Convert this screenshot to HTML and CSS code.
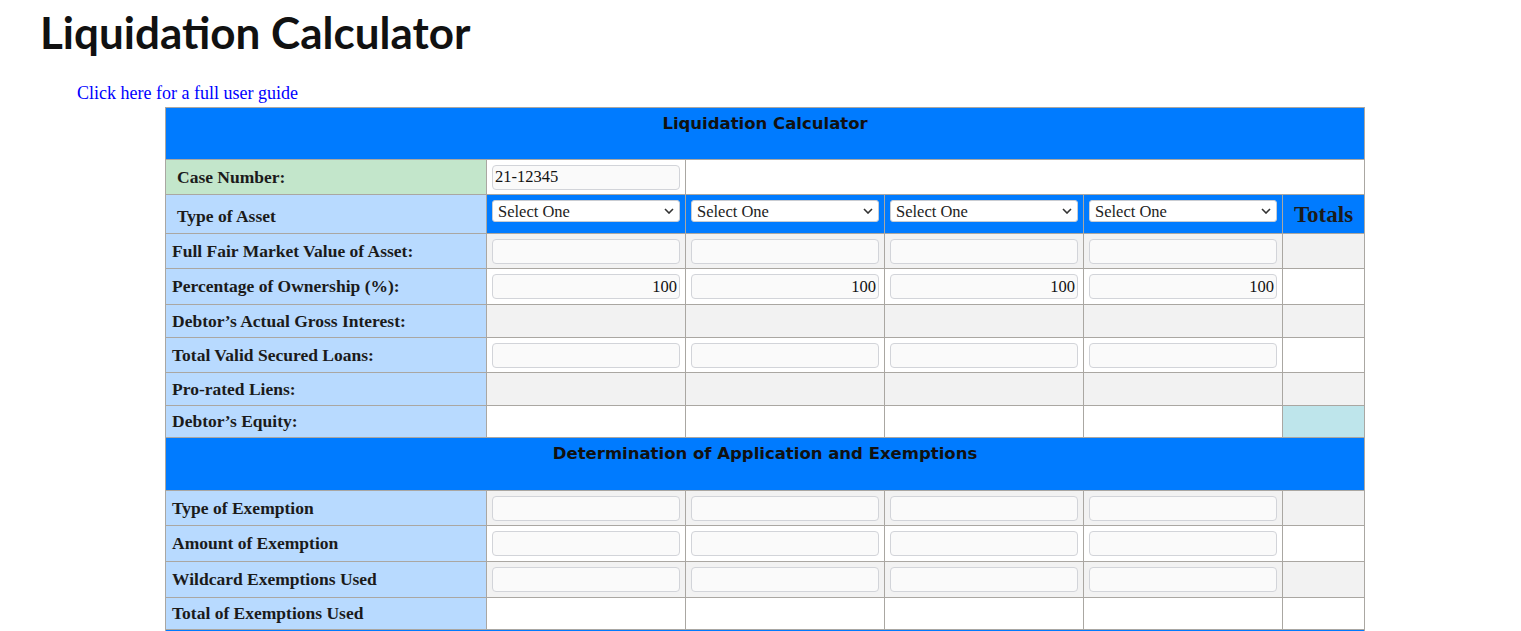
FILE: index.html
```html
<!DOCTYPE html>
<html>
<head>
<meta charset="utf-8">
<title>Liquidation Calculator</title>
<link rel="stylesheet" href="styles.css">
</head>
<body>
<h1 class="title">Liquidation Calculator</h1>
<p class="guide"><a href="#" class="guide-link">Click here for a full user guide</a></p>
<table class="calc">
  <colgroup>
    <col class="c-label">
    <col class="c-asset">
    <col class="c-asset">
    <col class="c-asset">
    <col class="c-asset">
    <col class="c-total">
  </colgroup>
  <tr>
    <th colspan="6" class="section">Liquidation Calculator</th>
  </tr>
  <tr class="r-input">
    <td class="label label-green pad-wide">Case Number:</td>
    <td class="cell"><input class="field" type="text" value="21-12345"></td>
    <td colspan="4" class="cell"></td>
  </tr>
  <tr class="r-select">
    <td class="label pad-wide asset-label">Type of Asset</td>
    <td class="cell blue"><div class="pick-wrap"><select class="pick"><option>Select One</option></select><svg class="chev" viewBox="0 0 10 6" width="10" height="6"><path d="M1 1l4 4 4-4" fill="none" stroke="#333" stroke-width="1.6"/></svg></div></td>
    <td class="cell blue"><div class="pick-wrap"><select class="pick"><option>Select One</option></select><svg class="chev" viewBox="0 0 10 6" width="10" height="6"><path d="M1 1l4 4 4-4" fill="none" stroke="#333" stroke-width="1.6"/></svg></div></td>
    <td class="cell blue"><div class="pick-wrap"><select class="pick"><option>Select One</option></select><svg class="chev" viewBox="0 0 10 6" width="10" height="6"><path d="M1 1l4 4 4-4" fill="none" stroke="#333" stroke-width="1.6"/></svg></div></td>
    <td class="cell blue"><div class="pick-wrap"><select class="pick"><option>Select One</option></select><svg class="chev" viewBox="0 0 10 6" width="10" height="6"><path d="M1 1l4 4 4-4" fill="none" stroke="#333" stroke-width="1.6"/></svg></div></td>
    <td class="cell blue totals">Totals</td>
  </tr>
  <tr class="r-input gray">
    <td class="label">Full Fair Market Value of Asset:</td>
    <td class="cell"><input class="field" type="text"></td>
    <td class="cell"><input class="field" type="text"></td>
    <td class="cell"><input class="field" type="text"></td>
    <td class="cell"><input class="field" type="text"></td>
    <td class="cell"></td>
  </tr>
  <tr class="r-input r-tall">
    <td class="label">Percentage of Ownership (%):</td>
    <td class="cell"><input class="field num" type="text" value="100"></td>
    <td class="cell"><input class="field num" type="text" value="100"></td>
    <td class="cell"><input class="field num" type="text" value="100"></td>
    <td class="cell"><input class="field num" type="text" value="100"></td>
    <td class="cell"></td>
  </tr>
  <tr class="r-plain gray">
    <td class="label">Debtor’s Actual Gross Interest:</td>
    <td class="cell"></td><td class="cell"></td><td class="cell"></td><td class="cell"></td><td class="cell"></td>
  </tr>
  <tr class="r-input">
    <td class="label">Total Valid Secured Loans:</td>
    <td class="cell"><input class="field" type="text"></td>
    <td class="cell"><input class="field" type="text"></td>
    <td class="cell"><input class="field" type="text"></td>
    <td class="cell"><input class="field" type="text"></td>
    <td class="cell"></td>
  </tr>
  <tr class="r-plain gray">
    <td class="label">Pro-rated Liens:</td>
    <td class="cell"></td><td class="cell"></td><td class="cell"></td><td class="cell"></td><td class="cell"></td>
  </tr>
  <tr class="r-plain r-short">
    <td class="label">Debtor’s Equity:</td>
    <td class="cell"></td><td class="cell"></td><td class="cell"></td><td class="cell"></td><td class="cell info"></td>
  </tr>
  <tr>
    <th colspan="6" class="section section-tall">Determination of Application and Exemptions</th>
  </tr>
  <tr class="r-input gray">
    <td class="label">Type of Exemption</td>
    <td class="cell"><input class="field" type="text"></td>
    <td class="cell"><input class="field" type="text"></td>
    <td class="cell"><input class="field" type="text"></td>
    <td class="cell"><input class="field" type="text"></td>
    <td class="cell"></td>
  </tr>
  <tr class="r-input r-tall">
    <td class="label">Amount of Exemption</td>
    <td class="cell"><input class="field" type="text"></td>
    <td class="cell"><input class="field" type="text"></td>
    <td class="cell"><input class="field" type="text"></td>
    <td class="cell"><input class="field" type="text"></td>
    <td class="cell"></td>
  </tr>
  <tr class="r-input r-tall gray">
    <td class="label">Wildcard Exemptions Used</td>
    <td class="cell"><input class="field" type="text"></td>
    <td class="cell"><input class="field" type="text"></td>
    <td class="cell"><input class="field" type="text"></td>
    <td class="cell"><input class="field" type="text"></td>
    <td class="cell"></td>
  </tr>
  <tr class="r-plain r-short">
    <td class="label">Total of Exemptions Used</td>
    <td class="cell"></td><td class="cell"></td><td class="cell"></td><td class="cell"></td><td class="cell"></td>
  </tr>
  <tr>
    <th colspan="6" class="section section-end"></th>
  </tr>
</table>
</body>
</html>
```
FILE: styles.css
```css
html, body {
  margin: 0;
  padding: 0;
  background: #ffffff;
}
body {
  padding: 8px;
  font-family: "Liberation Serif", "Times New Roman", serif;
  color: #212529;
}
.title {
  font-family: "Lato", "Open Sans", sans-serif;
  font-weight: 700;
  font-size: 44px;
  line-height: 48px;
  color: #111111;
  margin: 0 0 0 32px;
}
.guide {
  margin: 27px 0 0 69px;
  font-size: 18px;
  line-height: 20px;
}
.guide-link {
  color: #0000ff;
  text-decoration: none;
}
.calc {
  margin: 4px 0 0 157px;
  width: 1199px;
  border-collapse: collapse;
  table-layout: fixed;
  border: 1px solid #aaa7a2;
}
.c-label { width: 321px; }
.c-asset { width: 199px; }
.c-total { width: 82px; }
.calc td, .calc th {
  border: 1px solid #aaa7a2;
  padding: 0;
}
.section {
  background: #007bff;
  color: #111111;
  font-family: "DejaVu Sans", Verdana, sans-serif;
  font-weight: 700;
  font-size: 16.5px;
  line-height: 18px;
  height: 44px;
  vertical-align: top;
  padding: 7px 0 0 0 !important;
  text-align: center;
}
.section-tall { height: 45px; }
.label {
  background: #b8daff;
  font-weight: 700;
  font-size: 17.5px;
  padding: 0 0 0 6px !important;
  color: #1b1b1b;
  white-space: nowrap;
}
.label-green { background: #c3e6cb; }
.pad-wide { padding-left: 11px !important; }
.cell {
  padding: 0 5px !important;
  vertical-align: middle;
}
.gray .cell { background: #f2f2f2; }
.blue { background: #007bff; }
.info { background: #bee5eb; }
.r-input td { height: 34px; }
.r-tall td { height: 35px; }
.r-plain td { height: 32px; }
.r-short td { height: 31px; }
.r-select .asset-label {
  height: 32px;
  vertical-align: bottom;
  padding-bottom: 6px !important;
}
.r-select .cell.blue {
  height: 33px;
  vertical-align: top;
  padding-top: 5px !important;
}
.r-select .cell.totals {
  height: 36px;
  vertical-align: middle;
  padding-top: 2px !important;
  text-align: center;
  font-weight: 700;
  font-size: 23px;
  color: #1b1b1b;
}
.field {
  display: block;
  box-sizing: border-box;
  width: 100%;
  height: 25px;
  margin: 0;
  padding: 0 2px;
  background: #fafafa;
  border: 1px solid #d2d4d9;
  border-radius: 4px;
  font-family: "Liberation Serif", serif;
  font-size: 16.5px;
  color: #111111;
}
.num { text-align: right; }
.pick-wrap {
  position: relative;
}
.pick {
  display: block;
  box-sizing: border-box;
  width: 100%;
  height: 22px;
  margin: 0;
  padding: 0 20px 0 5px;
  background: #ffffff;
  border: 1px solid #c9ccd2;
  border-radius: 3px;
  font-family: "Liberation Serif", serif;
  font-size: 16.5px;
  color: #222222;
  -webkit-appearance: none;
  appearance: none;
}
.chev {
  position: absolute;
  right: 6px;
  top: 8px;
  pointer-events: none;
}
```
